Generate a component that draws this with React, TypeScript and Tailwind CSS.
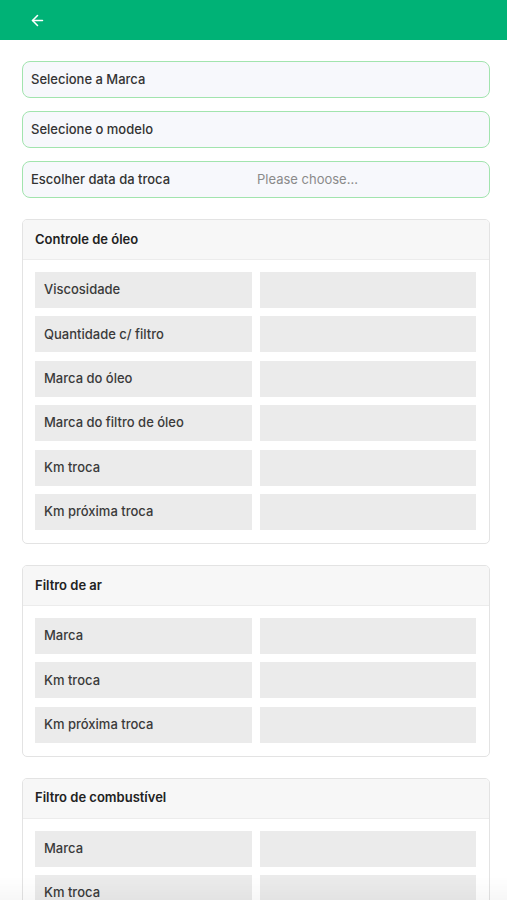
import React from "react";
import { ArrowLeft } from "lucide-react";

const sections = [
  {
    title: "Controle de óleo",
    rows: [
      "Viscosidade",
      "Quantidade c/ filtro",
      "Marca do óleo",
      "Marca do filtro de óleo",
      "Km troca",
      "Km próxima troca",
    ],
  },
  { title: "Filtro de ar", rows: ["Marca", "Km troca", "Km próxima troca"] },
  { title: "Filtro de combustível", rows: ["Marca", "Km troca", "Km próxima troca"] },
];

function Field({ label, placeholder }: { label: string; placeholder?: string }) {
  return (
    <div className="flex h-[37px] items-center rounded-[8px] border border-[#a2e4ae] bg-[#f7f8fc] px-[8px] text-[13px] font-medium text-[#333]">
      <span className="w-[226px]">{label}</span>
      {placeholder && <span className="font-normal text-[#8a8a8a]">{placeholder}</span>}
    </div>
  );
}

function Section({ title, rows }: { title: string; rows: string[] }) {
  return (
    <div className="overflow-hidden rounded-[5px] border border-[#e3e3e3] bg-white">
      <div className="flex h-[40px] items-center border-b border-[#ececec] bg-[#f7f7f7] px-[12px] text-[13px] font-semibold text-[#222]">
        {title}
      </div>
      <div className="flex flex-col gap-[8.4px] px-[12px] pt-[12px] pb-[13px] pr-[13px]">
        {rows.map((r) => (
          <div key={r} className="grid grid-cols-2 gap-[8px]">
            <div className="flex h-[36px] items-center bg-[#ebebeb] px-[9px] text-[13px] font-medium text-[#3a3a3a]">{r}</div>
            <div className="h-[36px] bg-[#ebebeb]" />
          </div>
        ))}
      </div>
    </div>
  );
}

export default function App() {
  return (
    <div className="relative min-h-[900px] bg-white" style={{ fontFamily: "Inter, 'Noto Sans', sans-serif" }}>
      <div className="flex h-[40px] items-center bg-[#00b276] px-[29px]">
        <ArrowLeft size={17} color="white" strokeWidth={2.2} />
      </div>
      <div className="flex flex-col gap-[13px] pl-[22px] pr-[17px] pt-[21px]">
        <Field label="Selecione a Marca" />
        <Field label="Selecione o modelo" />
        <Field label="Escolher data da troca" placeholder="Please choose..." />
      </div>
      <div className="flex flex-col gap-[21px] pl-[22px] pr-[17px] pt-[21px] pb-[20px]">
        {sections.map((s) => (
          <Section key={s.title} title={s.title} rows={s.rows} />
        ))}
      </div>
      <div className="pointer-events-none fixed bottom-0 left-0 right-0 h-[24px] bg-gradient-to-b from-transparent to-[#00000008]" />
    </div>
  );
}
